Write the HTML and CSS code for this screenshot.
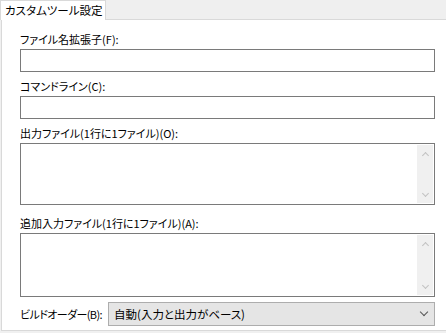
FILE: index.html
```html
<!DOCTYPE html>
<html lang="ja">
<head>
  <meta charset="UTF-8" />
  <title>カスタムツール設定</title>
  <link rel="stylesheet" href="styles.css">
</head>
<body>
  <div class="tabs">
    <div class="tab">カスタムツール設定</div>
  </div>

  <div class="panel">
    <label class="label first">ファイル名拡張子(F):</label>
    <input class="textbox" type="text" />

    <label class="label">コマンドライン(C):</label>
    <input class="textbox" type="text" />

    <label class="label">出力ファイル(1行に1ファイル)(O):</label>
    <div class="multi out">
      <textarea></textarea>
      <div class="vscroll">
        <span class="arrow up"></span>
        <span class="arrow down"></span>
      </div>
    </div>

    <label class="label second">追加入力ファイル(1行に1ファイル)(A):</label>
    <div class="multi extra">
      <textarea></textarea>
      <div class="vscroll">
        <span class="arrow up"></span>
        <span class="arrow down"></span>
      </div>
    </div>

    <div class="order">
      <span class="order-label">ビルドオーダー(B):</span>
      <div class="combo">
        <span>自動(入力と出力がベース)</span>
        <span class="chevron"></span>
      </div>
    </div>
  </div>
</body>
</html>
```

FILE: styles.css
```css
html, body {
  margin: 0;
  width: 446px;
  height: 333px;
  overflow: hidden;
}
body {
  background-color: #f0f0f0;
  font-family: "Noto Sans CJK JP", "Noto Sans", sans-serif;
  font-feature-settings: "palt";
  font-size: 11px;
  color: #000;
  white-space: nowrap;
}
.tabs {
  height: 19px;
  display: flex;
  background: #efefef;
}
.tab {
  width: 106px;
  height: 20px;
  background: #fff;
  border: 1px solid #d9d9d9;
  border-bottom: none;
  box-sizing: border-box;
  padding-left: 4px;
  font-size: 11.5px;
  line-height: 19px;
  position: relative;
  z-index: 1;
}
.panel {
  height: 312px;
  box-sizing: border-box;
  background: #fff;
  border: 1px solid #d9d9d9;
  border-right: none;
  margin-left: 1px;
  padding: 11px 11px 0 18px;
  display: flex;
  flex-direction: column;
}
.label {
  display: block;
  line-height: 16px;
  height: 16px;
  margin-top: 6px;
  margin-bottom: 2px;
}
.label.first { margin-top: 0; }
.label.second { margin-top: 10px; }
.textbox {
  height: 23px;
  box-sizing: border-box;
  border: 1px solid #7a7a7a;
  margin: 0;
  padding: 0 3px;
  font: inherit;
  outline: none;
}
.multi {
  display: flex;
  box-sizing: border-box;
  border: 1px solid #7a7a7a;
  padding: 1px;
}
.multi.out { height: 62px; }
.multi.extra { height: 64px; }
.multi textarea {
  flex: 1;
  border: none;
  resize: none;
  outline: none;
  font: inherit;
  padding: 1px 2px;
}
.vscroll {
  width: 16px;
  background: #f0f0f0;
  display: flex;
  flex-direction: column;
  justify-content: space-between;
  align-items: center;
  padding: 6px 0 5px;
  box-sizing: border-box;
}
.arrow {
  width: 4px;
  height: 4px;
  border-left: 1.5px solid #c2c2c2;
  border-top: 1.5px solid #c2c2c2;
}
.arrow.up { transform: rotate(45deg); margin-top: 2px; }
.arrow.down { transform: rotate(225deg); margin-bottom: 2px; }
.order {
  display: flex;
  align-items: center;
  margin-top: 5px;
}
.order-label {
  width: 88px;
  flex: none;
  letter-spacing: -0.6px;
}
.combo {
  flex: 1;
  height: 24px;
  box-sizing: border-box;
  background: #e5e5e5;
  border: 1px solid #adadad;
  display: flex;
  align-items: center;
  justify-content: space-between;
  padding: 0 7px 0 5px;
  font-size: 11.5px;
}
.chevron {
  width: 5px;
  height: 5px;
  border-right: 1.2px solid #555;
  border-bottom: 1.2px solid #555;
  transform: rotate(45deg);
  margin-top: -4px;
}
```
